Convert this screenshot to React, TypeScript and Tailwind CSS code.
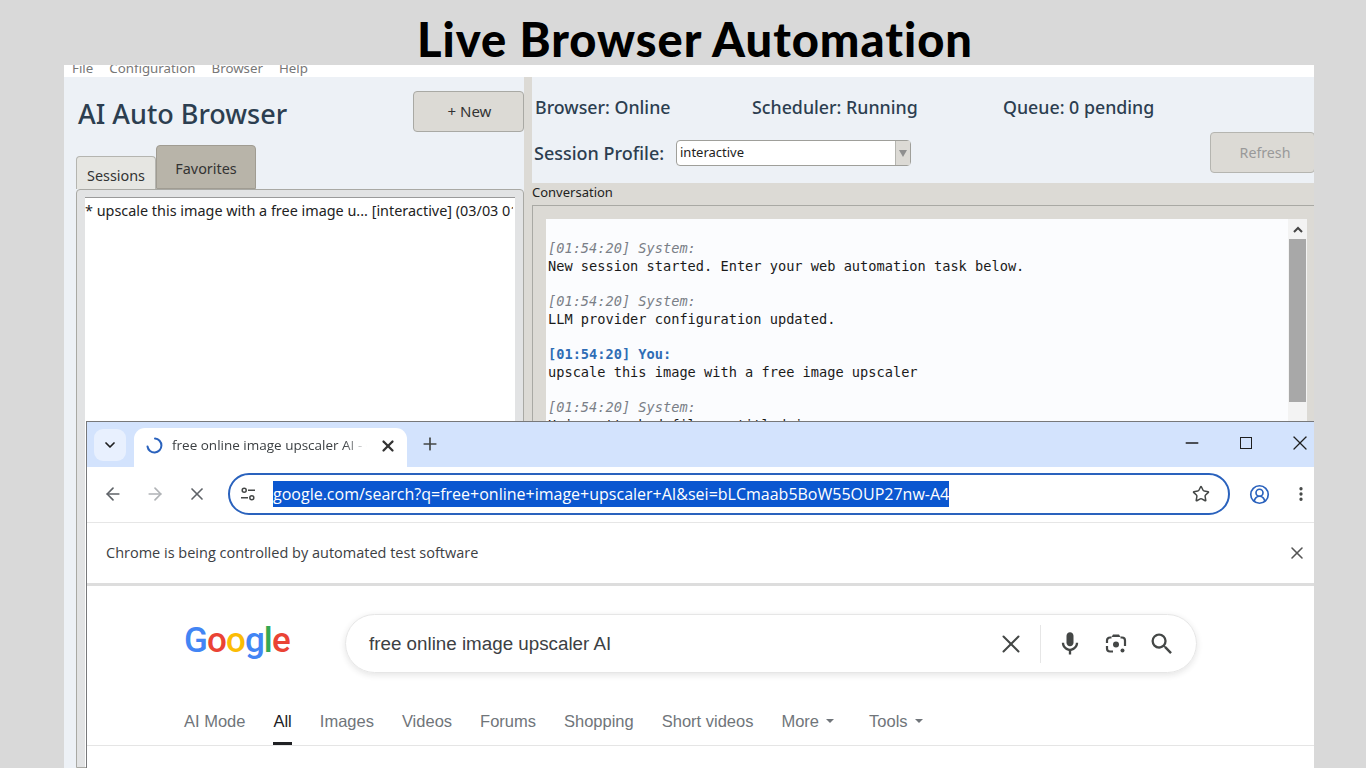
import { ArrowLeft, ArrowRight, ChevronDown, CircleUserRound, EllipsisVertical, Minus, Plus, Star, X } from 'lucide-react'

function MenuBar() {
  return (
    <div className="h-3 bg-white overflow-hidden flex gap-[16px] pl-[8px] font-['Noto_Sans',sans-serif] text-[13.3px] leading-[12px] text-[#777777]">
      <span className="-mt-[3px]">File</span>
      <span className="-mt-[3px]">Configuration</span>
      <span className="-mt-[3px]">Browser</span>
      <span className="-mt-[3px]">Help</span>
    </div>
  )
}

function LeftPanel() {
  return (
    <div className="w-[460px] bg-[#edf1f6] flex flex-col pl-3 font-['Noto_Sans',sans-serif]">
      <div className="flex items-start justify-between pt-[14px] pl-[2px]">
        <h1 className="text-[27px] leading-[46px] font-medium text-[#2c3e50]">AI Auto Browser</h1>
        <button className="w-[111px] h-[41px] bg-[#dcdad5] border border-[#a9a9a4] rounded-sm text-[15px] text-[#333333] pl-[2px]">+ New</button>
      </div>
      <div className="flex items-end h-[44px] mt-[8px] text-[14.4px] text-[#333333]">
        <div className="w-[80px] h-[33px] bg-[#e6e6e2] border border-b-0 border-[#b5b5b0] rounded-t-sm flex items-center justify-center pt-[6px]">Sessions</div>
        <div className="w-[100px] h-[44px] bg-[#b8b4a9] border border-[#a09c92] rounded-t-sm flex items-center justify-center -mt-[1px] pt-[3px]">Favorites</div>
      </div>
      <div className="flex-1 border border-[#a9a9a4] rounded-t-sm bg-[#e2e3e4] pl-[8px] pr-[8px] pt-[7px]">
        <div className="h-full bg-white border-t border-[#9a9a9a] text-[14.4px] leading-[26px] text-[#222222]">
          <div className="w-[428px] whitespace-nowrap overflow-hidden">* upscale this image with a free image u... [interactive] (03/03 01:54)</div>
        </div>
      </div>
    </div>
  )
}

function RightPanel() {
  const sys = 'italic text-[#7a7f87]'
  return (
    <div className="flex-1 min-w-0 flex flex-col bg-[#edf1f6] font-['Noto_Sans',sans-serif]">
      <div className="flex items-center h-[46px] mt-[7px] pl-[3px] text-[17.8px] font-medium text-[#2c3e50]">
        <span className="w-[217px]">Browser: Online</span>
        <span className="w-[251px]">Scheduler: Running</span>
        <span>Queue: 0 pending</span>
      </div>
      <div className="flex items-center h-[46px] mb-[7px] pl-[2px]">
        <span className="text-[18px] font-medium text-[#2c3e50] w-[142px]">Session Profile:</span>
        <div className="w-[235px] h-[26px] bg-white border border-[#9f9f9a] rounded-sm flex items-center justify-between pl-[3px] text-[13px] text-[#222222]">
          interactive
          <div className="w-[15px] h-full bg-[#dcdad5] border-l border-[#b5b5b0] flex items-center justify-center">
            <div className="w-0 h-0 border-x-[4px] border-x-transparent border-t-[7px] border-t-[#8f8f8f]" />
          </div>
        </div>
        <button className="ml-auto w-[105px] h-[41px] bg-[#dcdad5] border border-[#b5b5b0] rounded-sm text-[14.2px] text-[#999999] -mr-[1px] pl-[5px] mt-[-1px]">Refresh</button>
      </div>
      <div className="flex-1 flex flex-col bg-[#dcdad5]">
        <div className="h-[22px] text-[13px] leading-[18px] text-[#222222]">Conversation</div>
        <div className="flex-1 border-t border-l border-[#a9a9a4] pl-[13px] pt-[13px] pr-[7px]">
          <div className="h-full flex bg-[#fbfcfe]">
            <div className="flex-1 pl-[2px] pt-[21px] font-['DejaVu_Sans_Mono',monospace] text-[13.65px] leading-[17.65px] text-[#1a1a1a]">
              <p className={sys}>[01:54:20] System:</p>
              <p>New session started. Enter your web automation task below.</p>
              <p>&nbsp;</p>
              <p className={sys}>[01:54:20] System:</p>
              <p>LLM provider configuration updated.</p>
              <p>&nbsp;</p>
              <p className="font-bold text-[#2f6db5]">[01:54:20] You:</p>
              <p>upscale this image with a free image upscaler</p>
              <p>&nbsp;</p>
              <p className={sys}>[01:54:20] System:</p>
              <p>Using attached file: untitled.jpg</p>
            </div>
            <div className="w-[19px] bg-[#f3f3f3] flex flex-col items-center">
              <svg width="12" height="20" viewBox="0 0 12 20" fill="none" stroke="#444444" strokeWidth="2"><path d="M2 13l4-4 4 4" /></svg>
              <div className="w-[17px] h-[163px] bg-[#a8a8a8]" />
            </div>
          </div>
        </div>
      </div>
    </div>
  )
}

function TuneIcon() {
  return (
    <svg width="14" height="14" viewBox="0 0 14 14" fill="none" stroke="#444746" strokeWidth="1.5" className="shrink-0">
      <circle cx="3.2" cy="3.2" r="2" />
      <path d="M7 3.2h7M0 10.8h7" />
      <circle cx="10.8" cy="10.8" r="2" />
    </svg>
  )
}

function LensIcon() {
  return (
    <svg width="24" height="24" viewBox="0 0 24 24" fill="none" stroke="#444746" strokeWidth="2.2">
      <path d="M9 2.5h6l1.5 2.5h-9z" fill="#444746" stroke="none" />
      <path d="M3 11V8.5a3 3 0 0 1 3-3h1.5M16.5 5.5H18a3 3 0 0 1 3 3V14M3 14v2.5a3 3 0 0 0 3 3h3" />
      <circle cx="12" cy="12.5" r="3" fill="#444746" stroke="none" />
      <circle cx="18.5" cy="18.5" r="2" fill="#444746" stroke="none" />
    </svg>
  )
}

function MicIcon() {
  return (
    <svg width="28" height="28" viewBox="0 0 24 24" fill="#444746" className="shrink-0">
      <path d="M12 14c1.66 0 3-1.34 3-3V5c0-1.66-1.34-3-3-3S9 3.34 9 5v6c0 1.66 1.34 3 3 3z" />
      <path d="M17 11c0 2.76-2.24 5-5 5s-5-2.24-5-5H5c0 3.53 2.61 6.43 6 6.92V21h2v-3.08c3.39-.49 6-3.39 6-6.92h-2z" />
    </svg>
  )
}

function SearchIcon() {
  return (
    <svg width="28" height="28" viewBox="0 0 24 24" fill="#444746" className="shrink-0">
      <path d="M15.5 14h-.79l-.28-.27A6.471 6.471 0 0 0 16 9.5 6.5 6.5 0 1 0 9.5 16c1.61 0 3.09-.59 4.23-1.57l.27.28v.79l5 4.99L20.49 19l-4.99-5zm-6 0C7.01 14 5 11.99 5 9.5S7.01 5 9.5 5 14 7.01 14 9.5 11.99 14 9.5 14z" />
    </svg>
  )
}

function ChromeWindow() {
  return (
    <div className="absolute left-[22px] top-[356px] right-0 bottom-0 bg-white border-t border-l border-[#77787a] flex flex-col font-['Open_Sans',sans-serif]">
      <div className="h-[45px] bg-[#d3e3fd] flex items-end relative shrink-0">
        <div className="absolute left-[7px] top-[7px] w-[32px] h-[32px] rounded-[9px] bg-[#e8f0fe] flex items-center justify-center">
          <ChevronDown size={16} strokeWidth={2.6} color="#1f1f1f" />
        </div>
        <div className="ml-[47px] w-[273px] h-[39px] bg-white rounded-t-[11px] flex items-center pl-[12px] pb-[4px]">
          <svg width="17" height="17" viewBox="0 0 17 17" fill="none" stroke="#2a62bd" strokeWidth="2" strokeLinecap="round" className="shrink-0"><path d="M9 1.5a7 7 0 1 1-7.5 8" /></svg>
          <span className="ml-[9px] w-[195px] shrink-0 overflow-hidden whitespace-nowrap text-[13.5px] text-[#3c4043] [mask-image:linear-gradient(to_right,black_88%,transparent)]">free online image upscaler AI - Google</span>
          <span className="ml-[12px] flex w-[18px] justify-center shrink-0"><X size={18} strokeWidth={3} color="#333333" className="shrink-0" /></span>
        </div>
        <Plus size={20} strokeWidth={2} color="#444746" className="ml-[13px] mb-[13px]" />
        <div className="ml-auto mb-[12px] flex items-center pr-[2px]">
          <span className="w-[54px] flex justify-center"><Minus size={20} strokeWidth={1.6} color="#1f1f1f" /></span>
          <span className="w-[54px] mr-[15px] flex justify-center"><span className="w-[12px] h-[12px] border-[1.5px] border-[#1f1f1f]" /></span>
          <span className="w-[24px] flex justify-center"><X size={24} strokeWidth={1.3} color="#1f1f1f" /></span>
        </div>
      </div>

      <div className="h-[56px] shrink-0 flex items-center border-b border-[#e6e6e6] pl-[5px] pb-[1px] bg-white">
        <span className="w-[42px] shrink-0 flex justify-center"><ArrowLeft size={20} strokeWidth={2} color="#5f6368" /></span>
        <span className="w-[42px] shrink-0 flex justify-center"><ArrowRight size={20} strokeWidth={2} color="#b0b3b6" /></span>
        <span className="w-[42px] shrink-0 flex justify-center"><X size={20} strokeWidth={2} color="#5f6368" /></span>
        <div className="ml-[10px] w-[1002px] shrink-0 h-[42px] rounded-full border-2 border-[#2a62bd] flex items-center pl-[11px] pr-[18px]">
          <TuneIcon />
          <span className="ml-[18px] bg-[#0b57d0] text-white text-[16px] leading-[26px] whitespace-nowrap">google.com/search?q=free+online+image+upscaler+AI&amp;sei=bLCmaab5BoW55OUP27nw-A4</span>
          <Star size={18} strokeWidth={2} color="#444746" className="ml-auto shrink-0" />
        </div>
        <span className="ml-[8px] w-[42px] shrink-0 flex justify-center"><CircleUserRound size={21} strokeWidth={1.9} color="#2a62bd" /></span>
        <span className="ml-[7px] w-[28px] shrink-0 flex justify-center"><EllipsisVertical size={18} strokeWidth={2.4} color="#444746" /></span>
      </div>

      <div className="h-[63px] shrink-0 flex items-center justify-between pl-[19px] pr-[7px] border-b-[3px] border-[#dddddd] text-[14.5px] text-[#3c4043]">
        Chrome is being controlled by automated test software
        <X size={20} strokeWidth={1.9} color="#555555" />
      </div>

      <div className="flex-1 flex flex-col font-['Liberation_Sans',sans-serif]">
        <div className="flex items-center pl-[97px] pt-[28px]">
          <div className="w-[161px] shrink-0 font-['Roboto',sans-serif] font-medium text-[35px] leading-[36px] tracking-[-0.9px] -mt-[5px]">
            <span className="text-[#4285f4]">G</span>
            <span className="text-[#ea4335]">o</span>
            <span className="text-[#fbbc05]">o</span>
            <span className="text-[#4285f4]">g</span>
            <span className="text-[#34a853]">l</span>
            <span className="text-[#ea4335]">e</span>
          </div>
          <div className="w-[852px] h-[59px] rounded-full border border-[#e6e6e6] shadow-[0_2px_6px_rgba(32,33,36,0.12)] flex items-center pl-[23px] pr-[22px] text-[18.8px] text-[#3c4043]">
            <span className="mt-[2px]">free online image upscaler AI</span>
            <span className="ml-auto w-6 flex justify-center mt-[1px]"><X size={30} strokeWidth={1.6} color="#444746" className="shrink-0" /></span>
            <div className="w-px h-[38px] bg-[#e6e6e6] ml-[17px]" />
            <span className="ml-[17px] w-6 flex justify-center mt-[1px]"><MicIcon /></span>
            <span className="ml-[22px] w-6 flex justify-center"><LensIcon /></span>
            <span className="ml-[22px] w-6 flex justify-center"><SearchIcon /></span>
          </div>
        </div>
        <div className="mt-[32px] h-[41px] flex gap-[28px] pl-[97px] border-b border-[#e5e5e5] text-[16.5px] leading-[32px] text-[#70757a]">
          <span>AI Mode</span>
          <span className="relative text-[#202124]">
            All
            <span className="absolute left-0 right-0 bottom-0 h-[3px] bg-[#202124]" />
          </span>
          <span>Images</span>
          <span>Videos</span>
          <span>Forums</span>
          <span>Shopping</span>
          <span>Short videos</span>
          <span className="flex items-center gap-[7px] h-[32px]">More<span className="w-0 h-0 border-x-[4px] border-x-transparent border-t-[4px] border-t-[#70757a]" /></span>
          <span className="flex items-center gap-[7px] h-[32px] ml-[7px]">Tools<span className="w-0 h-0 border-x-[4px] border-x-transparent border-t-[4px] border-t-[#70757a]" /></span>
        </div>
      </div>
    </div>
  )
}

export default function App() {
  return (
    <div className="h-[768px] overflow-hidden bg-[#d9d9d9] flex flex-col">
      <div className="h-[65px] flex justify-center items-center pl-[24px] pt-[14px] font-['Lato',sans-serif] font-black text-[47px] tracking-[1px] leading-[51px] text-black whitespace-nowrap">
        Live Browser Automation
      </div>
      <div className="relative flex-1 min-h-0 ml-[64px] w-[1250px] flex flex-col overflow-hidden">
        <MenuBar />
        <div className="flex-1 min-h-0 flex">
          <LeftPanel />
          <div className="w-2 bg-[#dcdad5]" />
          <RightPanel />
        </div>
        <ChromeWindow />
      </div>
    </div>
  )
}
